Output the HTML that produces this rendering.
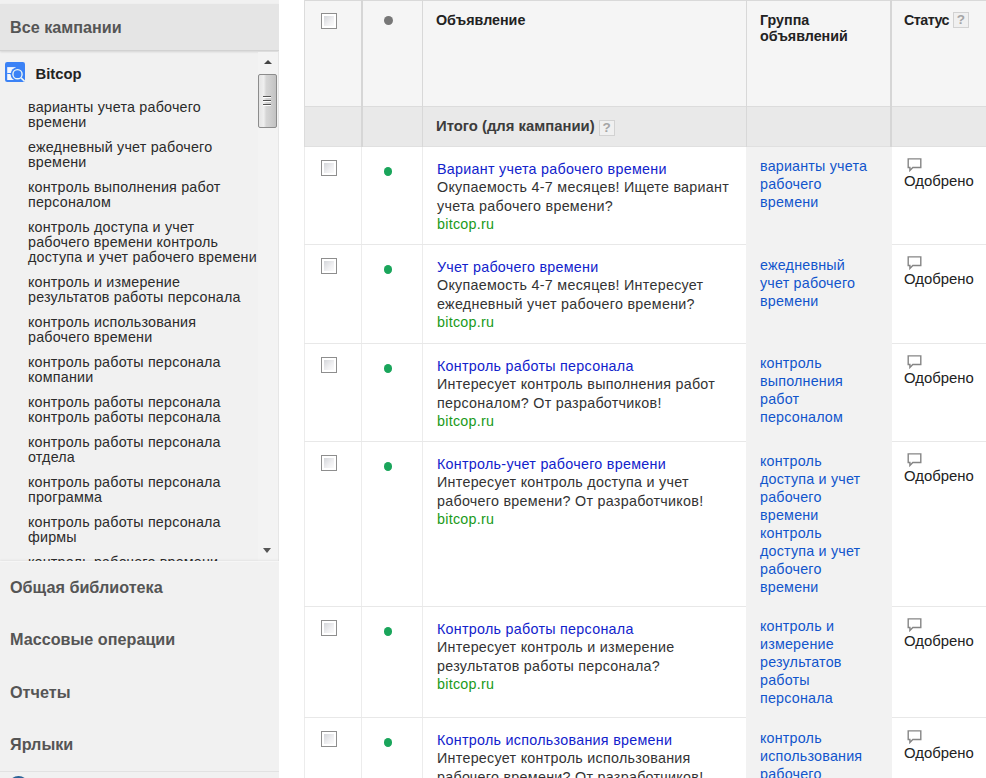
<!DOCTYPE html>
<html lang="ru">
<head>
<meta charset="utf-8">
<title>Все кампании</title>
<style>
*{box-sizing:border-box;}
html,body{margin:0;padding:0;}
body{width:986px;height:778px;overflow:hidden;position:relative;background:#fff;font-family:"Liberation Sans",Arial,sans-serif;color:#222;}
/* ---------- sidebar ---------- */
#side{position:absolute;left:0;top:0;width:279px;height:778px;background:#f1f1f1;overflow:hidden;}
#side .top{position:absolute;left:0;top:4px;width:279px;height:47px;background:#e5e5e5;border-bottom:1px solid #d2d2d2;box-shadow:0 1px 2px rgba(0,0,0,.12);}
#side .top span{position:absolute;left:10px;top:14px;font-weight:bold;font-size:16.2px;line-height:18px;color:#555;}
#tree{position:absolute;left:0;top:52px;width:258px;height:509px;overflow:hidden;}
#tree .camp{position:absolute;left:35.5px;top:13px;font-weight:bold;font-size:14.8px;line-height:18px;color:#222;}
#tree svg.ico{position:absolute;left:5px;top:10px;}
#tree ul{list-style:none;margin:0;padding:0;position:absolute;left:28px;top:43px;width:240px;}
#tree li{font-size:14.3px;letter-spacing:.2px;line-height:15px;padding:5px 0;color:#2b2b2b;white-space:nowrap;}
#sbar{position:absolute;left:258px;top:52px;width:21px;height:509px;background:#f3f3f3;border-right:1px solid #e6e6e6;}
#sbar .thumb{position:absolute;left:0;top:22px;width:19px;height:54px;border:1px solid #8c8c8c;border-radius:2px;background:linear-gradient(90deg,#e4e4e4 0%,#efefef 28%,#d6d6d6 42%,#cdcdcd 70%,#c2c2c2 100%);}
#sbar .thumb i{position:absolute;left:4px;width:8px;height:2px;background:#555;border-bottom:1px solid #fff;}
#sbar .up{position:absolute;left:5.5px;top:8px;width:0;height:0;border-left:4.5px solid transparent;border-right:4.5px solid transparent;border-bottom:4.5px solid #444;}
#sbar .down{position:absolute;left:5px;top:496px;width:0;height:0;border-left:4.5px solid transparent;border-right:4.5px solid transparent;border-top:5px solid #555;}
#bottom{position:absolute;left:0;top:561px;width:279px;height:217px;background:#f1f1f1;border-top:1px solid #f6f6f6;box-shadow:0 -1px 2px rgba(0,0,0,.06);}
#bottom div{position:absolute;left:10px;font-weight:bold;font-size:16.2px;line-height:18px;color:#555;white-space:nowrap;}
#bottom hr{position:absolute;left:0;top:209px;width:279px;height:1px;border:0;margin:0;background:#e2e2e2;}
#bottom .arc{position:absolute;left:8px;top:214px;width:21px;height:21px;border:2px solid #2b6296;border-radius:50%;}
/* ---------- table ---------- */
#tbl{position:absolute;left:304px;top:0;width:700px;height:778px;}
.col{position:absolute;top:0;height:778px;}
.hd{position:absolute;left:0;top:0;width:700px;height:107px;background:#f5f5f5;border-top:1px solid #d9d9d9;border-bottom:1px solid #dcdcdc;}
.tot{position:absolute;left:0;top:107px;width:700px;height:40px;background:#e9e9e9;border-bottom:1px solid #e0e0e0;}
.vl{position:absolute;top:0;width:1px;background:#d8d8d8;}
.hl{position:absolute;left:0;height:1px;width:700px;background:#e8e8e8;}
.th{position:absolute;font-weight:bold;font-size:14.3px;line-height:16px;color:#222;white-space:nowrap;}
.q{display:inline-block;width:16px;height:16px;border:1px solid #d2d2d2;background:#f0f0f0;color:#a5a5a5;font-size:13.5px;line-height:14px;letter-spacing:0;text-align:center;font-weight:bold;vertical-align:top;margin-left:4px;}
.grpbg{z-index:1;position:absolute;left:442px;top:147px;width:146px;height:640px;background:#f2f2f2;}
.cb{position:absolute;left:17px;width:16px;height:16px;border:1px solid #8e8e8e;background:#fff;padding:2px;}
.cb:after{content:"";display:block;width:100%;height:100%;background:linear-gradient(135deg,#d4d6da 0%,#f0f0f2 60%,#fbfbfb 100%);}
.dot{position:absolute;left:80px;width:8.3px;height:8.8px;border-radius:50%;background:#1aa55b;}
.ad{position:absolute;left:133px;width:320px;font-size:14.3px;letter-spacing:.28px;line-height:18.3px;color:#333;white-space:nowrap;}
.ad a{color:#1122cc;text-decoration:none;}
.ad .u{color:#1a9a1a;}
.grp{z-index:2;position:absolute;left:456px;width:130px;font-size:14.3px;letter-spacing:.2px;line-height:18px;color:#1155cc;white-space:nowrap;}
.st{position:absolute;left:600px;font-size:14.9px;line-height:18px;color:#222;white-space:nowrap;}
.st svg{display:block;margin:0 0 0 3px;}
</style>
</head>
<body>

<div id="side">
  <div class="top"><span>Все кампании</span></div>
  <div id="tree">
    <svg class="ico" width="20" height="20" viewBox="0 0 20 20">
      <rect x="0" y="0" width="20" height="20" rx="2.2" fill="#3b82f6"/>
      <rect x="2.2" y="5.1" width="8.5" height="12.9" fill="#f4f7fc"/>
      <rect x="2.2" y="11" width="8.5" height="1" fill="#3b82f6"/>
      <circle cx="12.5" cy="12.2" r="6.9" fill="#3b82f6"/>
      <circle cx="12.5" cy="12.2" r="4.6" fill="none" stroke="#eef6f4" stroke-width="1.4"/>
      <path d="M16 15.9 L19.6 19.2" stroke="#eef6f4" stroke-width="1.7"/>
    </svg>
    <div class="camp">Bitcop</div>
    <ul>
      <li>варианты учета рабочего<br>времени</li>
      <li>ежедневный учет рабочего<br>времени</li>
      <li>контроль выполнения работ<br>персоналом</li>
      <li>контроль доступа и учет<br>рабочего времени контроль<br>доступа и учет рабочего времени</li>
      <li>контроль и измерение<br>результатов работы персонала</li>
      <li>контроль использования<br>рабочего времени</li>
      <li>контроль работы персонала<br>компании</li>
      <li>контроль работы персонала<br>контроль работы персонала</li>
      <li>контроль работы персонала<br>отдела</li>
      <li>контроль работы персонала<br>программа</li>
      <li>контроль работы персонала<br>фирмы</li>
      <li>контроль рабочего времени<br>персонала</li>
    </ul>
  </div>
  <div id="sbar">
    <div class="up"></div>
    <div class="thumb"><i style="top:21px"></i><i style="top:25px"></i><i style="top:29px"></i></div>
    <div class="down"></div>
  </div>
  <div id="bottom">
    <div style="top:16px">Общая библиотека</div>
    <div style="top:68px">Массовые операции</div>
    <div style="top:121px">Отчеты</div>
    <div style="top:173px">Ярлыки</div>
    <hr>
    <span class="arc"></span>
  </div>
</div>

<div id="tbl">
  <div class="hd"></div>
  <div class="tot"></div>
  <div class="grpbg"></div>
  <!-- column rules -->
  <div class="vl" style="left:0;height:147px;background:#dcdcdc"></div>
  <div class="vl" style="left:57px;height:147px;width:2px;background:#d6d6d6"></div>
  <div class="vl" style="left:118px;height:147px"></div>
  <div class="vl" style="left:442px;height:147px"></div>
  <div class="vl" style="left:586px;height:147px;width:2px;background:#d6d6d6"></div>
  <div class="vl" style="left:0;top:147px;height:640px;background:#ececec"></div>
  <div class="vl" style="left:57px;top:147px;height:640px;background:#ececec"></div>
  <div class="vl" style="left:118px;top:147px;height:640px;background:#ececec"></div>
  <!-- header -->
  <div class="cb" style="top:13px"></div>
  <div class="dot" style="top:16px;background:#777;width:9px;height:9px"></div>
  <div class="th" style="left:132px;top:12px">Объявление</div>
  <div class="th" style="left:456px;top:12px">Группа<br>объявлений</div>
  <div class="th" style="left:600px;top:12px"><span style="letter-spacing:-.55px">Статус</span><span class="q" style="margin-left:4px;margin-top:0">?</span></div>
  <div class="th" style="left:132px;top:118px;font-size:14.85px;color:#3c3c3c">Итого (для кампании)<span class="q" style="margin-top:2px">?</span></div>
  <!-- rows -->
  <div class="cb" style="top:160px"></div>
  <div class="dot" style="top:167px"></div>
  <div class="ad" style="top:160px"><a>Вариант учета рабочего времени</a><br>Окупаемость 4-7 месяцев! Ищете вариант<br>учета рабочего времени?<br><span class="u">bitcop.ru</span></div>
  <div class="grp" style="top:157px">варианты учета<br>рабочего<br>времени</div>
  <div class="st" style="top:158px"><svg width="16" height="14" viewBox="0 0 16 14"><path d="M1.2 0.9h12.6v8.6h-8l-2.9 3v-3h-1.7z" fill="#fff" stroke="#858585" stroke-width="1.4"/></svg>Одобрено</div>
  <div class="hl" style="top:244px"></div>
  <div class="cb" style="top:258px"></div>
  <div class="dot" style="top:265px"></div>
  <div class="ad" style="top:258px"><a>Учет рабочего времени</a><br>Окупаемость 4-7 месяцев! Интересует<br>ежедневный учет рабочего времени?<br><span class="u">bitcop.ru</span></div>
  <div class="grp" style="top:256px">ежедневный<br>учет рабочего<br>времени</div>
  <div class="st" style="top:256px"><svg width="16" height="14" viewBox="0 0 16 14"><path d="M1.2 0.9h12.6v8.6h-8l-2.9 3v-3h-1.7z" fill="#fff" stroke="#858585" stroke-width="1.4"/></svg>Одобрено</div>
  <div class="hl" style="top:343px"></div>
  <div class="cb" style="top:357px"></div>
  <div class="dot" style="top:364px"></div>
  <div class="ad" style="top:357px"><a>Контроль работы персонала</a><br>Интересует контроль выполнения работ<br>персоналом? От разработчиков!<br><span class="u">bitcop.ru</span></div>
  <div class="grp" style="top:354px">контроль<br>выполнения<br>работ<br>персоналом</div>
  <div class="st" style="top:355px"><svg width="16" height="14" viewBox="0 0 16 14"><path d="M1.2 0.9h12.6v8.6h-8l-2.9 3v-3h-1.7z" fill="#fff" stroke="#858585" stroke-width="1.4"/></svg>Одобрено</div>
  <div class="hl" style="top:441px"></div>
  <div class="cb" style="top:455px"></div>
  <div class="dot" style="top:462px"></div>
  <div class="ad" style="top:455px"><a>Контроль-учет рабочего времени</a><br>Интересует контроль доступа и учет<br>рабочего времени? От разработчиков!<br><span class="u">bitcop.ru</span></div>
  <div class="grp" style="top:452px">контроль<br>доступа и учет<br>рабочего<br>времени<br>контроль<br>доступа и учет<br>рабочего<br>времени</div>
  <div class="st" style="top:453px"><svg width="16" height="14" viewBox="0 0 16 14"><path d="M1.2 0.9h12.6v8.6h-8l-2.9 3v-3h-1.7z" fill="#fff" stroke="#858585" stroke-width="1.4"/></svg>Одобрено</div>
  <div class="hl" style="top:606px"></div>
  <div class="cb" style="top:620px"></div>
  <div class="dot" style="top:627px"></div>
  <div class="ad" style="top:620px"><a>Контроль работы персонала</a><br>Интересует контроль и измерение<br>результатов работы персонала?<br><span class="u">bitcop.ru</span></div>
  <div class="grp" style="top:617px">контроль и<br>измерение<br>результатов<br>работы<br>персонала</div>
  <div class="st" style="top:618px"><svg width="16" height="14" viewBox="0 0 16 14"><path d="M1.2 0.9h12.6v8.6h-8l-2.9 3v-3h-1.7z" fill="#fff" stroke="#858585" stroke-width="1.4"/></svg>Одобрено</div>
  <div class="hl" style="top:717px"></div>
  <div class="cb" style="top:731px"></div>
  <div class="dot" style="top:738px"></div>
  <div class="ad" style="top:731px"><a>Контроль использования времени</a><br>Интересует контроль использования<br>рабочего времени? От разработчиков!<br><span class="u">bitcop.ru</span></div>
  <div class="grp" style="top:729px">контроль<br>использования<br>рабочего<br>времени</div>
  <div class="st" style="top:730px"><svg width="16" height="14" viewBox="0 0 16 14"><path d="M1.2 0.9h12.6v8.6h-8l-2.9 3v-3h-1.7z" fill="#fff" stroke="#858585" stroke-width="1.4"/></svg>Одобрено</div>
</div>

</body>
</html>
